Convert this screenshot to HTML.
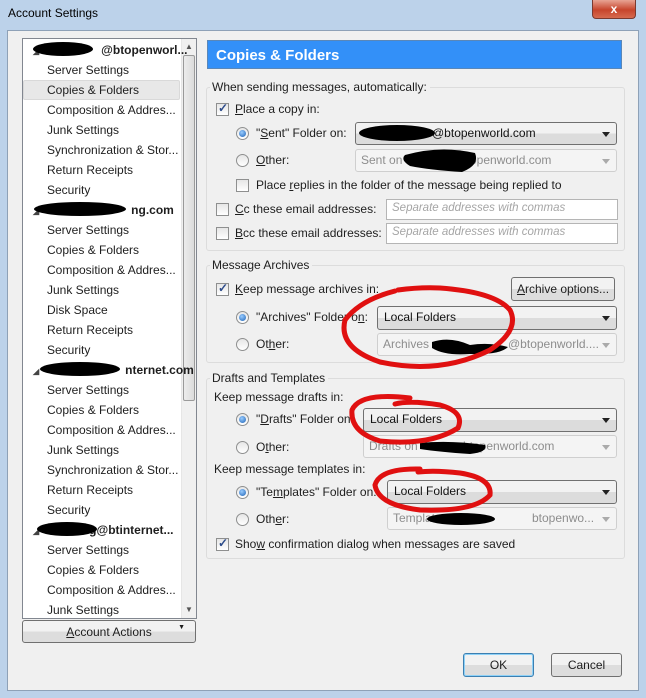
<!DOCTYPE html><html><head><style>
*{margin:0;padding:0;box-sizing:border-box}
body{width:646px;height:698px;position:relative;overflow:hidden;background:#bcd2ea;font-family:"Liberation Sans",sans-serif;font-size:12px;color:#1e1e1e}
.a{position:absolute;white-space:nowrap}
.cb{position:absolute;width:13px;height:13px;border:1px solid #8e8f8f;background:linear-gradient(#e6e6e6,#fff)}
.cb.on::after{content:"✓";position:absolute;left:1px;top:-3px;font-size:12px;color:#2c4b8a;font-weight:bold}
.rd{position:absolute;width:13px;height:13px;border-radius:50%;border:1px solid #8e8f8f;background:linear-gradient(#e6e6e6,#fff)}
.rd.on::after{content:"";position:absolute;left:2px;top:2px;width:7px;height:7px;border-radius:50%;background:radial-gradient(circle at 40% 35%,#9cf,#1d62b5)}
.dd{position:absolute;border:1px solid #707070;border-radius:3px;background:linear-gradient(#f2f2f2 50%,#dcdcdc 50%);padding:3px 0 0 6px;color:#111}
.dd::after{content:"";position:absolute;right:6px;top:9px;border:4px solid transparent;border-top:5px solid #222}
.dd.dis{border-color:#cfcfcf;background:#f4f4f4;color:#8d8d8d}
.dd.dis::after{border-top-color:#aaa}
.dd span{position:absolute;top:3px}
.in{position:absolute;border:1px solid #b5b5b5;background:#fff;color:#a5a5a5;font-style:italic;padding:2px 0 0 5px;font-size:11.5px}
.btn{position:absolute;border:1px solid #707070;border-radius:3px;background:linear-gradient(#f2f2f2 50%,#dddddd 50%);text-align:center;padding-top:4px}
.grp{position:absolute;border:1px solid #dcdcdc;border-radius:3px}
.lg{position:absolute;background:#f0f0f0;padding:0 3px 0 2px}
.tr{position:absolute;left:0;width:158px;height:20px;padding:3px 0 0 24px}
.ac{padding-left:10px;font-weight:bold}
</style></head><body>
<div class="a" style="left:8px;top:6px;font-size:12px;color:#000">Account Settings</div>
<div class="a" style="left:592px;top:0;width:44px;height:19px;border:1px solid #7a3a30;border-top:none;border-radius:0 0 4px 4px;background:linear-gradient(#e8a493,#c7452c 55%,#d66a4f);color:#fff;text-align:center;font-weight:bold;font-size:12px;padding-top:2px">x</div>
<div class="a" style="left:7px;top:30px;width:632px;height:661px;background:#f0f0f0;border:1px solid #8ea1b7"></div>

<div class="a" style="left:22px;top:38px;width:175px;height:581px;background:#fff;border:1px solid #828790;overflow:hidden">
<div class="a" style="left:158px;top:0;width:16px;height:579px;background:#f0f0f0;border-left:1px solid #e6e6e6"></div>
<div class="a" style="left:160px;top:16px;width:12px;height:346px;background:linear-gradient(90deg,#ececec,#dcdcdc);border:1px solid #9a9a9a;border-radius:2px"></div>
<div class="a" style="left:162px;top:3px;font-size:8px;color:#555">▲</div>
<div class="a" style="left:162px;top:566px;font-size:8px;color:#555">▼</div>
<div class="a" style="left:0;top:41px;width:157px;height:20px;background:#e8e8e8;border:1px solid #d9d9d9;border-radius:2px"></div>
<div id="tree"></div>
</div>
<div class="btn" style="left:22px;top:620px;width:174px;height:23px"><u>A</u>ccount Actions<span style="position:absolute;right:10px;top:3px;font-size:7px">▼</span></div>

<div class="a" style="left:207px;top:40px;width:415px;height:29px;background:#3390f8;border:1px solid #5a87b8;color:#fff;font-weight:bold;font-size:15px;padding:6px 0 0 8px">Copies &amp; Folders</div>

<div class="grp" style="left:206px;top:87px;width:419px;height:164px"></div>
<div class="lg a" style="left:210px;top:80px">When sending messages, automatically:</div>
<div class="cb on" style="left:216px;top:103px"></div><div class="a" style="left:235px;top:102px"><u>P</u>lace a copy in:</div>
<div class="rd on" style="left:236px;top:127px"></div><div class="a" style="left:256px;top:126px">"<u>S</u>ent" Folder on:</div>
<div class="dd" style="left:355px;top:122px;width:262px;height:23px"><span style="left:76px">@btopenworld.com</span></div>
<div class="rd" style="left:236px;top:154px"></div><div class="a" style="left:256px;top:153px"><u>O</u>ther:</div>
<div class="dd dis" style="left:355px;top:149px;width:262px;height:23px"><span style="left:5px">Sent on</span><span style="left:104px">btopenworld.com</span></div>
<div class="cb" style="left:236px;top:179px"></div><div class="a" style="left:256px;top:178px">Place <u>r</u>eplies in the folder of the message being replied to</div>
<div class="cb" style="left:216px;top:203px"></div><div class="a" style="left:235px;top:202px"><u>C</u>c these email addresses:</div>
<div class="in" style="left:386px;top:199px;width:232px;height:21px">Separate addresses with commas</div>
<div class="cb" style="left:216px;top:227px"></div><div class="a" style="left:235px;top:226px"><u>B</u>cc these email addresses:</div>
<div class="in" style="left:386px;top:223px;width:232px;height:21px">Separate addresses with commas</div>

<div class="grp" style="left:206px;top:265px;width:419px;height:98px"></div>
<div class="lg a" style="left:210px;top:258px">Message Archives</div>
<div class="cb on" style="left:216px;top:283px"></div><div class="a" style="left:235px;top:282px"><u>K</u>eep message archives in:</div>
<div class="btn" style="left:511px;top:277px;width:104px;height:24px"><u>A</u>rchive options...</div>
<div class="rd on" style="left:236px;top:311px"></div><div class="a" style="left:256px;top:310px">"Archives" Folder o<u>n</u>:</div>
<div class="dd" style="left:377px;top:306px;width:240px;height:24px">Local Folders</div>
<div class="rd" style="left:236px;top:338px"></div><div class="a" style="left:256px;top:337px">Ot<u>h</u>er:</div>
<div class="dd dis" style="left:377px;top:333px;width:240px;height:23px"><span style="left:5px">Archives</span><span style="left:130px">@btopenworld....</span></div>

<div class="grp" style="left:206px;top:378px;width:419px;height:181px"></div>
<div class="lg a" style="left:210px;top:371px">Drafts and Templates</div>
<div class="a" style="left:214px;top:390px">Keep message drafts in:</div>
<div class="rd on" style="left:236px;top:413px"></div><div class="a" style="left:256px;top:412px">"<u>D</u>rafts" Folder on:</div>
<div class="dd" style="left:363px;top:408px;width:254px;height:24px">Local Folders</div>
<div class="rd" style="left:236px;top:441px"></div><div class="a" style="left:256px;top:440px">O<u>t</u>her:</div>
<div class="dd dis" style="left:363px;top:435px;width:254px;height:23px"><span style="left:5px">Drafts on</span><span style="left:99px">btopenworld.com</span></div>
<div class="a" style="left:214px;top:462px">Keep message templates in:</div>
<div class="rd on" style="left:236px;top:486px"></div><div class="a" style="left:256px;top:485px">"Te<u>m</u>plates" Folder on:</div>
<div class="dd" style="left:387px;top:480px;width:230px;height:24px">Local Folders</div>
<div class="rd" style="left:236px;top:513px"></div><div class="a" style="left:256px;top:512px">Oth<u>e</u>r:</div>
<div class="dd dis" style="left:387px;top:507px;width:230px;height:23px"><span style="left:5px">Templates on</span><span style="left:144px">btopenwo...</span></div>
<div class="cb on" style="left:216px;top:538px"></div><div class="a" style="left:235px;top:537px">Sho<u>w</u> confirmation dialog when messages are saved</div>

<div class="btn" style="left:463px;top:653px;width:71px;height:24px;border-color:#3c7fb1;box-shadow:inset 0 0 0 1px #8ed1f7">OK</div>
<div class="btn" style="left:551px;top:653px;width:71px;height:24px">Cancel</div>

<svg class="a" style="left:0;top:0" width="646" height="698">
<g fill="#000">
<ellipse cx="63" cy="49" rx="30" ry="7"/>
<ellipse cx="80" cy="209" rx="46" ry="7"/>
<ellipse cx="80" cy="369" rx="40" ry="7"/>
<ellipse cx="67" cy="529" rx="30" ry="7"/>
<ellipse cx="397" cy="133" rx="38" ry="8"/>
<path d="M405 155 Q440 145 475 153 Q480 165 462 172 Q430 170 410 166 Q400 160 405 155Z"/>
<path d="M432 342 Q450 336 470 345 Q490 342 508 347 Q500 355 470 354 Q445 356 432 348Z"/>
<path d="M420 443 Q450 440 485 445 Q488 452 470 454 Q440 452 420 449Z"/>
<ellipse cx="461" cy="519" rx="34" ry="6"/>
</g>
<g fill="none" stroke="#e01010" stroke-width="5" stroke-linecap="round">
<path d="M395 291 Q360 300 345 320 Q338 348 380 362 Q440 375 490 350 Q520 330 510 310 Q495 292 440 288 Q420 287 398 290"/>
<path d="M410 398 Q360 392 352 410 Q350 432 380 441 Q430 446 458 428 Q465 412 440 405 Q410 400 395 404"/>
<path d="M420 469 Q380 468 375 485 Q378 505 420 510 Q475 512 490 495 Q492 478 460 473 Q435 470 418 472"/>
</g>
</svg>
<script>
var rows=[["@btopenworl...",1],["Server Settings"],["Copies & Folders"],["Composition & Addres..."],["Junk Settings"],["Synchronization & Stor..."],["Return Receipts"],["Security"],["ng.com",1],["Server Settings"],["Copies & Folders"],["Composition & Addres..."],["Junk Settings"],["Disk Space"],["Return Receipts"],["Security"],["nternet.com",1],["Server Settings"],["Copies & Folders"],["Composition & Addres..."],["Junk Settings"],["Synchronization & Stor..."],["Return Receipts"],["Security"],["g@btinternet...",1],["Server Settings"],["Copies & Folders"],["Composition & Addres..."],["Junk Settings"]];
var pad=[0,0,0,0,0,0,0,0,102,0,0,0,0,0,0,0,96,0,0,0,0,0,0,0,60];
var h="";rows.forEach(function(r,i){var t=r[0].replace("&","&amp;");if(r[1]){h+='<div class="tr ac" style="top:'+(i*20+1)+'px"><span style="font-size:8px;color:#444">◢</span><span style="padding-left:'+(i==0?62:pad[i]-10)+'px">'+t+'</span></div>';}else h+='<div class="tr" style="top:'+(i*20+1)+'px">'+t+'</div>';});
document.getElementById("tree").innerHTML=h;
</script>
</body></html>
